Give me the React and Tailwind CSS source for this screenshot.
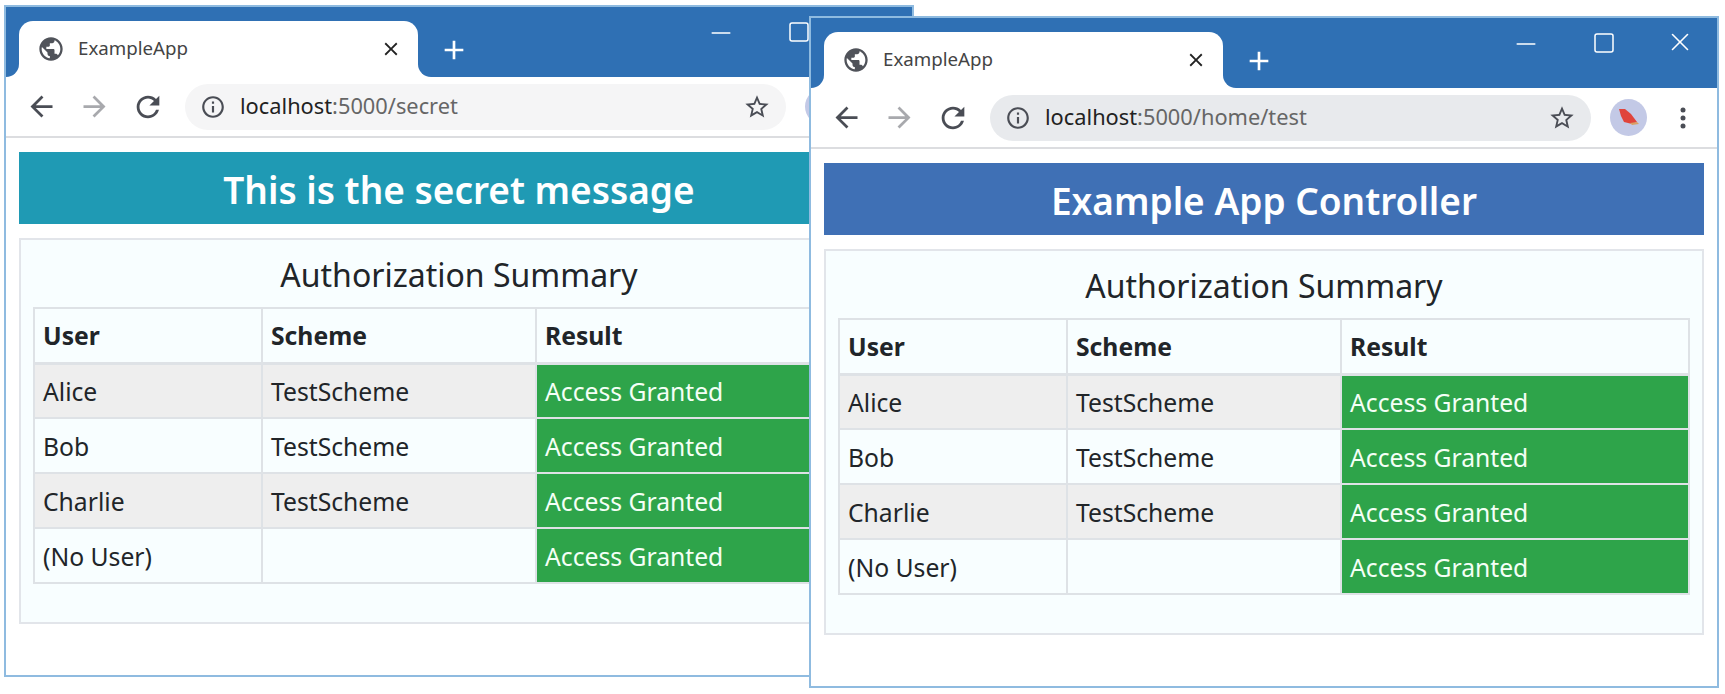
import { Minus, Square, X } from 'lucide-react'
import {
  MdAdd,
  MdArrowBack,
  MdArrowForward,
  MdClose,
  MdInfoOutline,
  MdPublic,
  MdRefresh,
  MdStarBorder,
} from 'react-icons/md'

const rows = [
  { user: 'Alice', scheme: 'TestScheme', striped: true },
  { user: 'Bob', scheme: 'TestScheme', striped: false },
  { user: 'Charlie', scheme: 'TestScheme', striped: true },
  { user: '(No User)', scheme: '', striped: false },
]

function Avatar() {
  return (
    <svg width="37" height="37" viewBox="0 0 37 37" className="shrink-0">
      <circle cx="18.5" cy="18.5" r="18.5" fill="#c3c9e6" />
      <path d="M9 10 L15 10 L21 15 L27 23 L22 25 L14 23 L11 17 Z" fill="#e0443c" />
      <path d="M20 24 L27 23 L29 25 L22 26 Z" fill="#d9a066" />
    </svg>
  )
}

function Summary() {
  return (
    <div className="h-[386px] border-2 border-[#e2e5ea] bg-[#f8feff] px-[12px]">
      <h2 className="h-[67px] pt-[14px] text-center text-[32px] leading-[42px] text-[#212529]">
        Authorization Summary
      </h2>
      <table className="w-[852px] table-fixed border-collapse text-[24.7px] text-[#212529]">
        <colgroup>
          <col className="w-[228px]" />
          <col className="w-[274px]" />
          <col />
        </colgroup>
        <thead>
          <tr className="h-[55px] font-bold">
            <td className="border-2 border-b-[3px] border-[#dee2e6] px-2">User</td>
            <td className="border-2 border-b-[3px] border-[#dee2e6] px-2">Scheme</td>
            <td className="border-2 border-b-[3px] border-[#dee2e6] px-2">Result</td>
          </tr>
        </thead>
        <tbody>
          {rows.map((r) => (
            <tr key={r.user} className={r.striped ? 'h-[55px] bg-[#eeeeee]' : 'h-[55px]'}>
              <td className="border-2 border-[#dee2e6] px-2 pt-[2px]">{r.user}</td>
              <td className="border-2 border-[#dee2e6] px-2 pt-[2px]">{r.scheme}</td>
              <td className="border-2 border-[#dee2e6] bg-[#2ea44a] px-2 pt-[2px] text-[#f4fff6]">Access Granted</td>
            </tr>
          ))}
        </tbody>
      </table>
    </div>
  )
}

function BrowserWindow({ className, path, title, bannerColor, omniboxColor }) {
  return (
    <div className={`absolute h-[672px] w-[910px] border-2 border-[#8fbbe0] bg-white ${className}`}>
      <div className="relative flex h-[70px] items-end bg-[#2f70b4] pl-[13px]">
        <div className="relative flex h-[56px] w-[399px] items-center rounded-t-[14px] bg-white pb-[1px] pl-[18px] pr-[16px]">
          <div className="absolute bottom-0 left-[-13px] h-[13px] w-[13px] bg-white">
            <div className="h-full w-full rounded-br-[13px] bg-[#2f70b4]" />
          </div>
          <div className="absolute bottom-0 right-[-13px] h-[13px] w-[13px] bg-white">
            <div className="h-full w-full rounded-bl-[13px] bg-[#2f70b4]" />
          </div>
          <MdPublic size={28} className="shrink-0 text-[#50535a]" />
          <span className="ml-[13px] flex-1 text-[18.7px] text-[#444444]">ExampleApp</span>
          <MdClose size={22} className="text-[#222222]" />
        </div>
        <MdAdd size={32} className="mb-[11px] ml-[20px] text-white" />
        <Minus size={30} strokeWidth={1.3} className="absolute left-[700px] top-[11px] text-white" />
        <Square size={24} strokeWidth={1.5} className="absolute left-[781px] top-[13px] text-white" />
        <X size={30} strokeWidth={1.3} className="absolute left-[854px] top-[9px] text-white" />
      </div>
      <div className="flex h-[61px] items-center border-b-2 border-[#dcdde0] pl-[19px] pr-[16px]">
        <MdArrowBack size={33} className="shrink-0 text-[#4a4d55]" />
        <MdArrowForward size={33} className="ml-[20px] shrink-0 text-[#a8a9ad]" />
        <MdRefresh size={34} className="ml-[20px] shrink-0 text-[#4a4d55]" />
        <div className={`ml-[20px] flex h-[46px] w-[601px] shrink-0 items-center rounded-full pl-[15px] pr-[15px] ${omniboxColor}`}>
          <MdInfoOutline size={26} className="shrink-0 text-[#4a4d55]" />
          <span className="ml-[14px] flex-1 text-[21.8px] text-[#666666]">
            <span className="text-[#222222]">localhost</span>:5000{path}
          </span>
          <MdStarBorder size={28} className="shrink-0 text-[#4a4d55]" />
        </div>
        <div className="ml-[19px]">
          <Avatar />
        </div>
        <svg width="6" height="24" viewBox="0 0 6 24" className="ml-[33px] shrink-0 fill-[#4a4d55]">
          <circle cx="3" cy="4" r="2.5" />
          <circle cx="3" cy="12" r="2.5" />
          <circle cx="3" cy="20" r="2.5" />
        </svg>
      </div>
      <div className="px-[13px] pt-[14px]">
        <div className={`mb-[14px] flex h-[72px] items-center justify-center pt-1 text-[37px] font-semibold text-white ${bannerColor}`}>
          {title}
        </div>
        <Summary />
      </div>
    </div>
  )
}

export default function App() {
  return (
    <div className="relative h-[694px] w-[1725px] overflow-hidden bg-white [font-family:'Noto_Sans',sans-serif]">
      <BrowserWindow
        className="left-[4px] top-[5px]"
        path="/secret"
        title="This is the secret message"
        bannerColor="bg-[#1f9ab4]"
        omniboxColor="bg-[#f5f5f6]"
      />
      <BrowserWindow
        className="left-[809px] top-[16px]"
        path="/home/test"
        title="Example App Controller"
        bannerColor="bg-[#3f70b5]"
        omniboxColor="bg-[#e8eaed]"
      />
    </div>
  )
}
